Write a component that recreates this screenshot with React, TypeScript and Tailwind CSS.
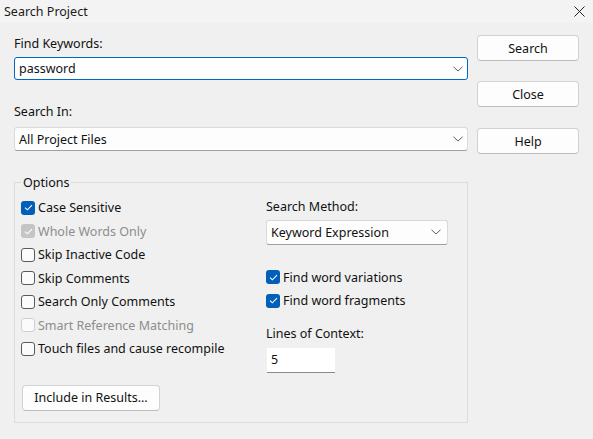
import React from "react";

const font = { fontFamily: '"Noto Sans", "Open Sans", sans-serif' };

function Chevron() {
  return (
    <svg width="10" height="6" viewBox="0 0 10 6" className="shrink-0">
      <path d="M0.5 0.8 L5 5 L9.5 0.8" fill="none" stroke="#5f5f5f" strokeWidth="1" />
    </svg>
  );
}

function Check({ checked, disabled }: { checked?: boolean; disabled?: boolean }) {
  if (checked) {
    return (
      <span
        className={
          "flex h-[14px] w-[14px] shrink-0 items-center justify-center rounded-[3px] " +
          (disabled ? "bg-[#c5c5c5]" : "bg-[#005fb8]")
        }
      >
        <svg width="9" height="7" viewBox="0 0 9 7">
          <path d="M1 3.6 L3.4 5.8 L8 1.2" fill="none" stroke="#ffffff" strokeWidth="1.1" />
        </svg>
      </span>
    );
  }
  return (
    <span
      className={
        "h-[14px] w-[14px] shrink-0 rounded-[3px] border bg-[#fbfbfb] " +
        (disabled ? "border-[#cfcfcf]" : "border-[#5a5a5a]")
      }
    />
  );
}

function CheckRow({ label, checked, disabled }: { label: string; checked?: boolean; disabled?: boolean }) {
  return (
    <div className="flex h-[23.5px] items-center gap-[3px]">
      <Check checked={checked} disabled={disabled} />
      <span className={disabled ? "text-[#8d8d8d]" : "text-[#111]"}>{label}</span>
    </div>
  );
}

function Btn({ label, className }: { label: string; className?: string }) {
  return (
    <div
      className={
        "flex h-[26px] items-center justify-center rounded-[4px] border border-[#d2d2d2] border-b-[#bdbdbd] bg-[#fdfdfd] text-[#111] " +
        (className || "")
      }
    >
      {label}
    </div>
  );
}

export default function App() {
  return (
    <div className="flex h-[439px] w-[593px] flex-col bg-[#f0f0f0] text-[12.5px] leading-[17px]" style={font}>
      {/* title bar */}
      <div className="flex h-[23px] items-center justify-between bg-[#f3f3f3] pl-[4px] pr-[8px]">
        <span className="text-[#1a1a1a]">Search Project</span>
        <svg width="11" height="11" viewBox="0 0 11 11">
          <path d="M0.5 0.5 L10.5 10.5 M10.5 0.5 L0.5 10.5" stroke="#222" strokeWidth="1" />
        </svg>
      </div>

      <div className="flex gap-[9px] pl-[14px]">
        {/* left column */}
        <div className="flex w-[454px] flex-col">
          <div className="mt-[12px] text-[#111]">Find Keywords:</div>
          <div className="mt-[5px] flex h-[23px] items-center justify-between rounded-[3px] border border-[#0067c0] bg-white pl-[4px] pr-[4px]">
            <span className="text-[#111]">password</span>
            <Chevron />
          </div>
          <div className="mt-[23px] text-[#111]">Search In:</div>
          <div className="mt-[7px] flex h-[24px] items-center justify-between rounded-[3px] border border-[#dadada] border-b-[#a0a0a0] bg-[#fdfdfd] pl-[4px] pr-[4px]">
            <span className="text-[#111]">All Project Files</span>
            <Chevron />
          </div>

          {/* options group */}
          <div className="relative mt-[31px] flex h-[241px] border border-[#dcdcdc]">
            <span className="absolute -top-[9px] left-[6px] bg-[#f0f0f0] px-[2px] text-[#111]">Options</span>
            <div className="flex w-[251px] flex-col pl-[6px] pt-[13px]">
              <CheckRow label="Case Sensitive" checked />
              <CheckRow label="Whole Words Only" checked disabled />
              <CheckRow label="Skip Inactive Code" />
              <CheckRow label="Skip Comments" />
              <CheckRow label="Search Only Comments" />
              <CheckRow label="Smart Reference Matching" disabled />
              <CheckRow label="Touch files and cause recompile" />
              <Btn label="Include in Results..." className="ml-[1px] mt-[24px] w-[138px]" />
            </div>
            <div className="flex flex-col pt-[12px]">
              <div className="flex h-[23.5px] items-center text-[#111]">Search Method:</div>
              <div className="mt-[1px] flex h-[25px] w-[182px] items-center justify-between rounded-[3px] border border-[#dadada] border-b-[#a0a0a0] bg-[#fdfdfd] pl-[4px] pr-[6px]">
                <span className="text-[#111]">Keyword Expression</span>
                <Chevron />
              </div>
              <div className="mt-[21px]">
                <CheckRow label="Find word variations" checked />
                <CheckRow label="Find word fragments" checked />
              </div>
              <div className="mt-[9.5px] flex h-[23.5px] items-center text-[#111]">Lines of Context:</div>
              <div className="ml-[1px] mt-[2px] flex h-[25px] w-[68px] items-center border-b border-b-[#8a8a8a] bg-white pl-[4px] text-[#111]">
                5
              </div>
            </div>
          </div>
        </div>

        {/* right column */}
        <div className="flex w-[102px] flex-col">
          <Btn label="Search" className="mt-[12px]" />
          <Btn label="Close" className="mt-[20px]" />
          <Btn label="Help" className="mt-[21px]" />
        </div>
      </div>
    </div>
  );
}
